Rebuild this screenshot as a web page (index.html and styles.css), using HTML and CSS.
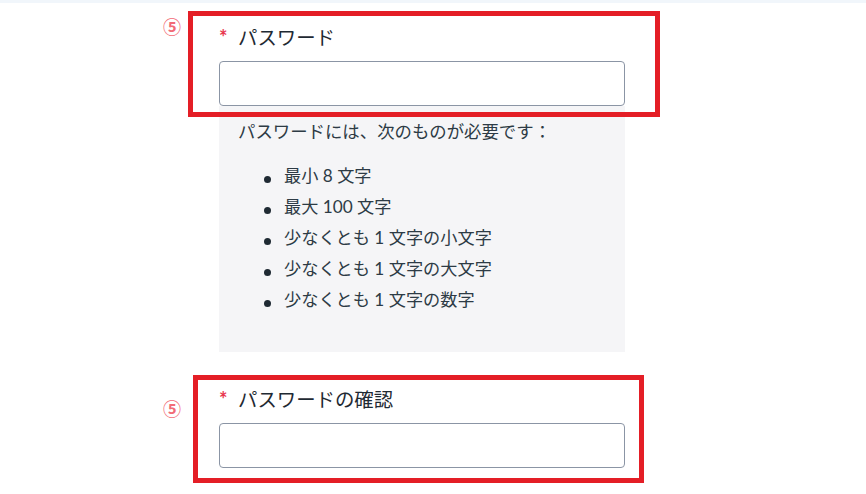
FILE: index.html
```html
<!DOCTYPE html>
<html lang="ja">
<head>
<meta charset="utf-8">
<link rel="stylesheet" href="styles.css">
</head>
<body>
<div class="topbar"></div>
<div class="page">
  <form class="form">
    <div class="field field-password">
      <label class="label"><span class="req">*</span><span class="label-text">パスワード</span></label>
      <input class="input" type="password">
      <div class="help">
        <p class="help-title">パスワードには、次のものが必要です：</p>
        <ul class="help-list">
          <li>最小 8 文字</li>
          <li>最大 100 文字</li>
          <li>少なくとも 1 文字の小文字</li>
          <li>少なくとも 1 文字の大文字</li>
          <li>少なくとも 1 文字の数字</li>
        </ul>
      </div>
    </div>
    <div class="field field-confirm">
      <label class="label"><span class="req">*</span><span class="label-text">パスワードの確認</span></label>
      <input class="input" type="password">
    </div>
  </form>
  <div class="mark mark-1">⑤</div>
  <div class="frame frame-1"></div>
  <div class="mark mark-2">⑤</div>
  <div class="frame frame-2"></div>
</div>
</body>
</html>
```
FILE: styles.css
```css
html, body {
  margin: 0;
  padding: 0;
  background: #ffffff;
}
body {
  font-family: Lato, "Noto Sans CJK JP", sans-serif;
  color: #2d3b45;
  width: 866px;
  height: 494px;
  overflow: hidden;
}
.topbar {
  height: 3px;
  background: #f1f6fb;
}
.page {
  position: relative;
}
.form {
  width: 406px;
  margin-left: 219px;
}
.field-password {
  padding-top: 22px;
}
.label {
  display: flex;
  align-items: baseline;
  height: 24px;
  font-size: 19.4px;
  line-height: 24px;
  color: #1f2a33;
}
.req {
  color: #e8374e;
  font-size: 20px;
  font-weight: 700;
  width: 19px;
}
.input {
  display: block;
  box-sizing: border-box;
  width: 406px;
  height: 45px;
  margin: 12px 0 0;
  border: 1px solid #8b95a5;
  border-radius: 4px;
  background: #fff;
}
.help {
  background: #f5f5f7;
  padding: 14px 19px 30px;
  height: 246px;
  box-sizing: border-box;
}
.help-title {
  margin: 0;
  font-size: 17.4px;
  line-height: 24px;
}
.help-list {
  list-style: none;
  margin: 16px 0 0;
  padding-left: 26px;
  font-size: 17.2px;
  line-height: 31px;
}
.help-list li {
  display: flex;
  align-items: center;
}
.help-list li::before {
  content: "";
  width: 7px;
  height: 7px;
  border-radius: 50%;
  background: #1f2a33;
  margin: 7px 13px 0 0;
  flex: none;
}
.field-confirm {
  padding-top: 35px;
}
.mark {
  position: absolute;
  font-family: "Noto Sans CJK JP", sans-serif;
  font-weight: 700;
  font-size: 18px;
  line-height: 18px;
  color: #f26b77;
  left: 163px;
}
.mark-1 { top: 14px; }
.mark-2 { top: 396px; }
.frame {
  position: absolute;
  border: 5px solid #e41e26;
  box-sizing: border-box;
}
.frame-1 {
  left: 188px;
  top: 8px;
  width: 472px;
  height: 106px;
}
.frame-2 {
  left: 193px;
  top: 372px;
  width: 451px;
  height: 108px;
}
```
